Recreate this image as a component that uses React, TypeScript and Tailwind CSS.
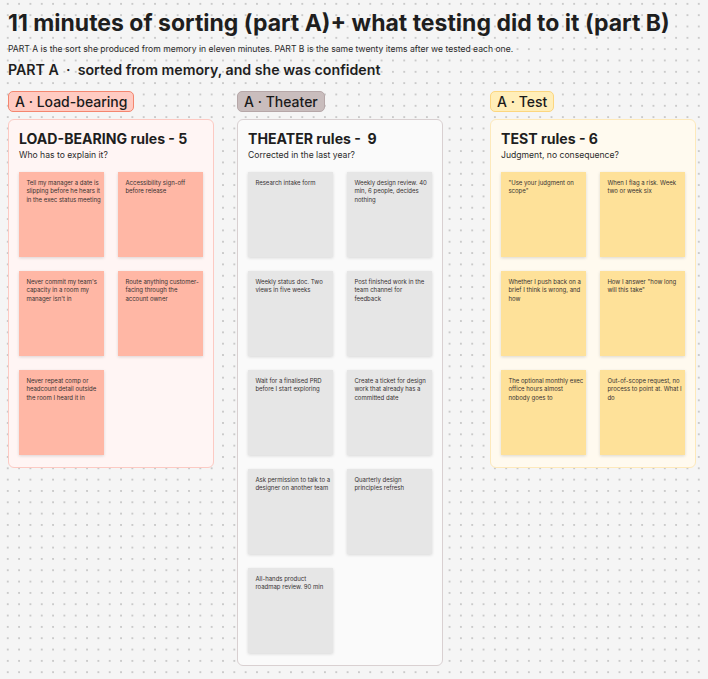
import React from "react";

type Col = {
  badge: string;
  title: React.ReactNode;
  sub: string;
  notes: string[][];
  badgeCls: string;
  panelCls: string;
  noteCls: string;
  ml: string;
};

const cols: Col[] = [
  {
    badge: "A · Load-bearing",
    title: "LOAD-BEARING rules - 5",
    sub: "Who has to explain it?",
    notes: [
      ["Tell my manager a date is", "slipping before he hears it", "in the exec status meeting"],
      ["Accessibility sign-off", "before release"],
      ["Never commit my team's", "capacity in a room my", "manager isn't in"],
      ["Route anything customer-", "facing through the", "account owner"],
      ["Never repeat comp or", "headcount detail outside", "the room I heard it in"],
    ],
    badgeCls: "bg-[#ffcbc2] border-[#f4866f]",
    panelCls: "bg-[#fff5f4] border-[#fccac3]",
    noteCls: "bg-[#ffb7a5]",
    ml: "ml-0",
  },
  {
    badge: "A · Theater",
    title: "THEATER rules -\u00a0\u00a09",
    sub: "Corrected in the last year?",
    notes: [
      ["Research intake form"],
      ["Weekly design review. 40", "min, 6 people, decides", "nothing"],
      ["Weekly status doc. Two", "views in five weeks"],
      ["Post finished work in the", "team channel for", "feedback"],
      ["Wait for a finalised PRD", "before I start exploring"],
      ["Create a ticket for design", "work that already has a", "committed date"],
      ["Ask permission to talk to a", "designer on another team"],
      ["Quarterly design", "principles refresh"],
      ["All-hands product", "roadmap review. 90 min"],
    ],
    badgeCls: "bg-[#c9bdbd] border-[#b6a7a8]",
    panelCls: "bg-[#fafafa] border-[#d9d0d1]",
    noteCls: "bg-[#e6e6e6]",
    ml: "ml-[23px]",
  },
  {
    badge: "A · Test",
    title: "TEST rules - 6",
    sub: "Judgment, no consequence?",
    notes: [
      ["\"Use your judgment on", "scope\""],
      ["When I flag a risk. Week", "two or week six"],
      ["Whether I push back on a", "brief I think is wrong, and", "how"],
      ["How I answer \"how long", "will this take\""],
      ["The optional monthly exec", "office hours almost", "nobody goes to"],
      ["Out-of-scope request, no", "process to point at. What I", "do"],
    ],
    badgeCls: "bg-[#ffeeb9] border-[#fcd67f]",
    panelCls: "bg-[#fffaef] border-[#fde9bb]",
    noteCls: "bg-[#fee199]",
    ml: "ml-[47px]",
  },
];

export default function App() {
  return (
    <div className="relative w-[708px] h-[679px] overflow-hidden bg-[#f5f5f5] bg-[radial-gradient(circle,#b4b4b4_0.55px,transparent_0.9px)] bg-[size:11.333px_11.333px] bg-[position:2.1px_9.5px] font-['Inter','Noto_Sans',sans-serif] text-[#1e1e1e] pt-[10px] pl-[8px]">
      <h1 className="text-[23px] leading-[27px] font-bold whitespace-nowrap">
        11 minutes of sorting (part A)+ what testing did to it (part B)
      </h1>
      <p className="mt-[6.6px] text-[8.6px] leading-[11px] text-[#2a2a2a] whitespace-nowrap">
        PART A is the sort she produced from memory in eleven minutes. PART B is the same twenty items after we tested each one.
      </p>
      <h2 className="mt-[6.4px] text-[14.2px] leading-[18px] font-semibold whitespace-pre">
        {"PART A  ·  sorted from memory, and she was confident"}
      </h2>
      <div className="mt-[12.5px] flex items-start">
        {cols.map((c, i) => (
          <div key={i} className={`flex flex-col items-start ${c.ml}`}>
            <div
              className={`h-[21px] rounded-[5px] border px-[6px] text-[14px] leading-[19px] font-medium text-[#1a1a1a] whitespace-nowrap ${c.badgeCls}`}
            >
              {c.badge}
            </div>
            <div
              className={`mt-[7px] w-[206px] rounded-[6px] border px-[10px] pt-[9px] pb-[12px] ${c.panelCls}`}
            >
              <div className="text-[14.1px] leading-[19px] font-bold whitespace-nowrap">{c.title}</div>
              <div className="mt-[0.5px] text-[8.6px] leading-[12px] text-[#2a2a2a]">{c.sub}</div>
              <div className="mt-[11px] grid grid-cols-[85px_85px] gap-[14px]">
                {c.notes.map((lines, j) => (
                  <div
                    key={j}
                    className={`h-[85px] pl-[7.4px] pt-[7px] text-[6px] leading-[8.5px] text-[#363232] whitespace-nowrap shadow-[0_1px_3px_rgba(0,0,0,0.14)] ${c.noteCls}`}
                  >
                    {lines.map((l, k) => (
                      <div key={k}>{l}</div>
                    ))}
                  </div>
                ))}
              </div>
            </div>
          </div>
        ))}
      </div>
    </div>
  );
}
